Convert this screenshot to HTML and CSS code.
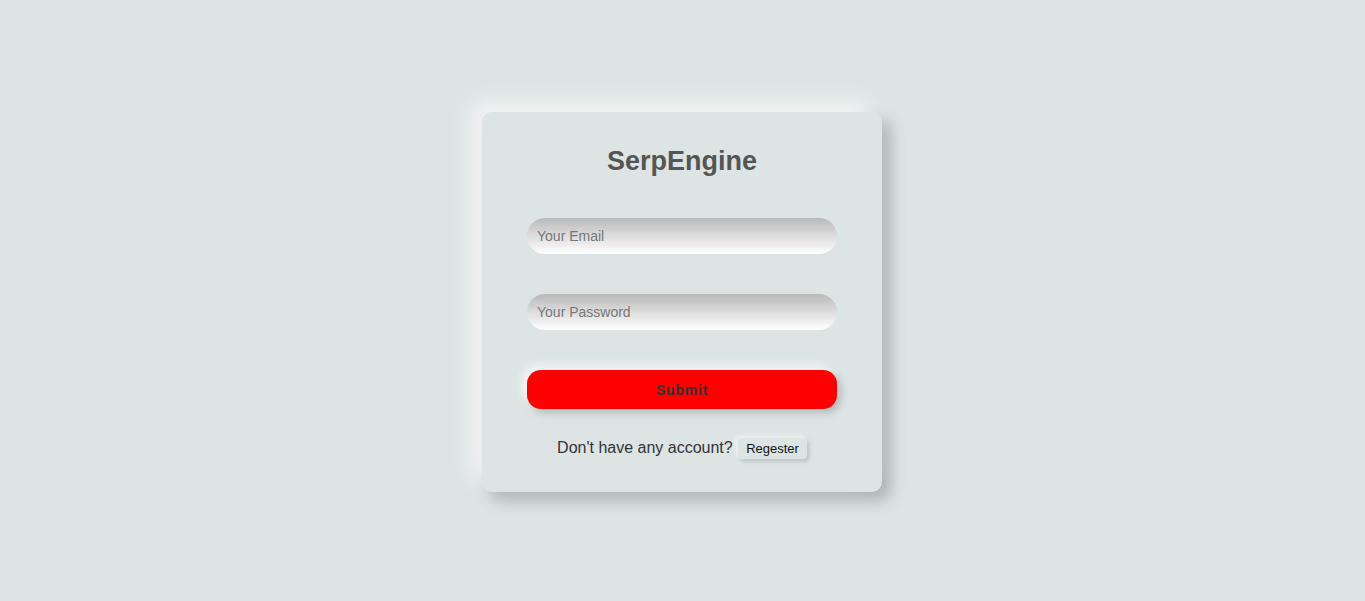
FILE: index.html
```html
<!DOCTYPE html>
<html>
<head>
<meta charset="utf-8">
<link rel="stylesheet" href="styles.css">
</head>
<body>
<div class="page">
  <form class="card">
    <h1 class="title">SerpEngine</h1>
    <input class="field" type="email" placeholder="Your Email">
    <input class="field" type="password" placeholder="Your Password">
    <button class="submit" type="button">Submit</button>
    <p class="footer">Don't have any account? <button class="reg" type="button">Regester</button></p>
  </form>
</div>
</body>
</html>
```
FILE: styles.css
```css
html, body {
  margin: 0;
  padding: 0;
  background: #dce5e4;
  font-family: "Liberation Sans", Arial, sans-serif;
}
.page {
  height: 601px;
  display: flex;
  justify-content: center;
  align-items: flex-start;
  padding-top: 112px;
  box-sizing: border-box;
}
.card {
  width: 400px;
  height: 380px;
  box-sizing: border-box;
  padding: 34px 45px 0;
  margin-right: 1px;
  background: #dce5e4;
  border-radius: 10px;
  box-shadow: -12px -12px 20px #f2f2f2, 8px 8px 16px #a9afae;
  display: flex;
  flex-direction: column;
}
.title {
  margin: 0 0 42px;
  font-size: 27px;
  line-height: 30px;
  font-weight: bold;
  color: #555;
  text-align: center;
}
.field {
  display: block;
  width: 310px;
  height: 36px;
  box-sizing: border-box;
  border: none;
  outline: none;
  border-radius: 18px;
  padding: 0 10px;
  font-family: "Liberation Sans", Arial, sans-serif;
  font-size: 14px;
  color: #555;
  background: linear-gradient(to bottom, #b9b9b9 0%, #e4e4e4 60%, #ffffff 100%);
  margin: 0 0 40px;
}
.field::placeholder {
  color: #777;
}
.submit {
  width: 310px;
  height: 39px;
  border: none;
  border-radius: 14px;
  background: #ff0000;
  color: #333;
  font-family: "Liberation Sans", Arial, sans-serif;
  font-weight: bold;
  font-size: 14px;
  letter-spacing: 0.8px;
  box-shadow: -4px -4px 10px #fafafa, 3px 3px 8px #a9afae;
  cursor: pointer;
}
.footer {
  margin: 28px 0 0;
  text-align: center;
  font-size: 16px;
  color: #333;
  line-height: 22px;
}
.reg {
  font-family: "Liberation Sans", Arial, sans-serif;
  font-size: 13px;
  color: #111;
  background: #dce5e4;
  border: none;
  border-radius: 4px;
  padding: 3px 8px;
  margin-left: 1px;
  box-shadow: -2px -2px 4px #f5f5f5, 2px 2px 4px #b5bcbb;
}
```
